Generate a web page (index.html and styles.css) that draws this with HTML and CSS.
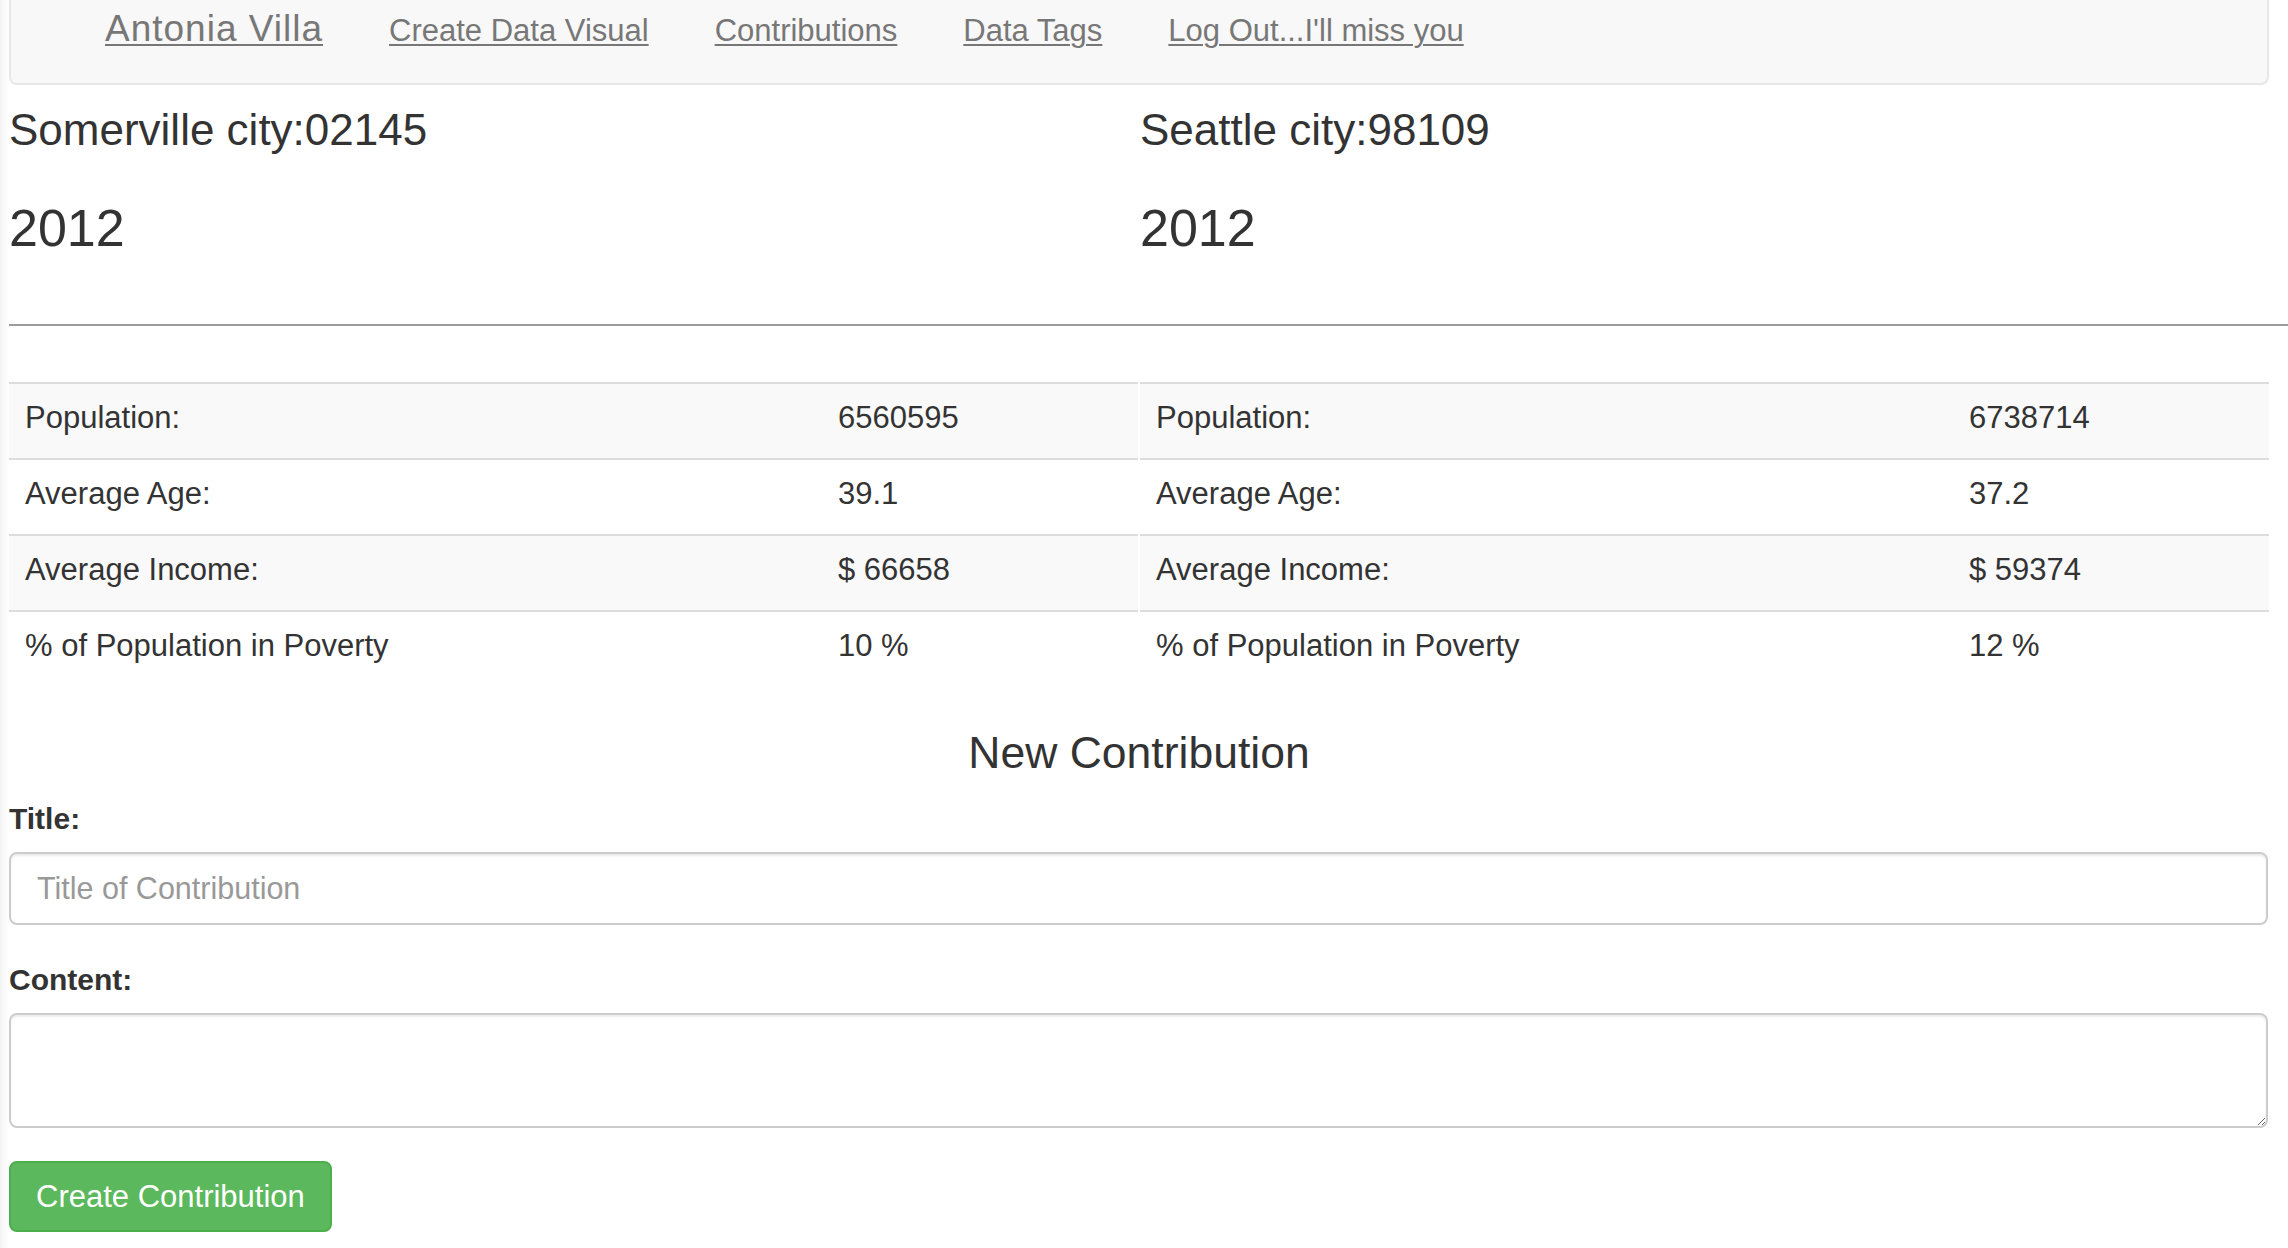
FILE: index.html
```html
<!DOCTYPE html>
<html lang="en">
<head>
<meta charset="utf-8">
<title>Compare Cities</title>
<link rel="stylesheet" href="styles.css">
</head>
<body>
<div class="wrap">
  <nav class="navbar">
    <a class="brand" href="#">Antonia Villa</a>
    <a class="nav-link" href="#">Create Data Visual</a>
    <a class="nav-link" href="#">Contributions</a>
    <a class="nav-link" href="#">Data Tags</a>
    <a class="nav-link" href="#">Log Out...I'll miss you</a>
  </nav>

  <section class="cities">
    <div class="city">
      <h3 class="city-name">Somerville city:02145</h3>
      <h2 class="city-year">2012</h2>
    </div>
    <div class="city">
      <h3 class="city-name">Seattle city:98109</h3>
      <h2 class="city-year">2012</h2>
    </div>
  </section>

  <hr class="divider">

  <section class="stats">
    <table class="stat-table">
      <tr><td class="label-cell">Population:</td><td>6560595</td></tr>
      <tr><td class="label-cell">Average Age:</td><td>39.1</td></tr>
      <tr><td class="label-cell">Average Income:</td><td>$ 66658</td></tr>
      <tr><td class="label-cell">% of Population in Poverty</td><td>10 %</td></tr>
    </table>
    <table class="stat-table">
      <tr><td class="label-cell">Population:</td><td>6738714</td></tr>
      <tr><td class="label-cell">Average Age:</td><td>37.2</td></tr>
      <tr><td class="label-cell">Average Income:</td><td>$ 59374</td></tr>
      <tr><td class="label-cell">% of Population in Poverty</td><td>12 %</td></tr>
    </table>
  </section>

  <h3 class="form-title">New Contribution</h3>

  <form class="contrib-form">
    <div class="form-group">
      <label class="form-label" for="title">Title:</label>
      <input class="form-input" id="title" type="text" placeholder="Title of Contribution">
    </div>
    <div class="form-group">
      <label class="form-label" for="content">Content:</label>
      <textarea class="form-textarea" id="content"></textarea>
    </div>
    <button class="btn-success" type="button">Create Contribution</button>
  </form>
</div>
</body>
</html>
```

FILE: styles.css
```css
* {
  box-sizing: border-box;
}

html, body {
  margin: 0;
  padding: 0;
}

body {
  font-family: "Liberation Sans", Arial, Helvetica, sans-serif;
  color: #333;
  background: linear-gradient(to right, #f3f3f3 0, #fbfbfb 5px, #ffffff 9px);
  min-height: 1248px;
  overflow: hidden;
}

.wrap {
  padding-left: 9px;
  width: 2288px;
}

/* Navbar */
.navbar {
  margin-right: 19px;
  height: 85px;
  background: #f8f8f8;
  border: 2px solid #e7e7e7;
  border-top: none;
  border-radius: 0 0 8px 8px;
  display: flex;
  align-items: baseline;
  padding: 9px 0 0 94px;
  gap: 66px;
}

.brand,
.nav-link {
  color: #777;
  text-decoration: underline;
  text-decoration-thickness: 2px;
  text-underline-offset: 3px;
  line-height: 40px;
}

.brand {
  font-size: 37px;
  letter-spacing: 1px;
}

.nav-link {
  font-size: 31px;
}

/* City headers */
.cities {
  margin-right: 19px;
  display: grid;
  grid-template-columns: 1131px 1fr;
}

.city-name {
  margin: 22px 0 0;
  font-size: 44px;
  line-height: 46px;
  font-weight: normal;
  color: #333;
}

.city-year {
  margin: 47px 0 0;
  font-size: 52px;
  line-height: 56px;
  font-weight: normal;
  color: #333;
}

.divider {
  margin: 68px 0 0;
  border: 0;
  height: 2px;
  background: #9c9c9c;
}

/* Stats tables */
.stats {
  margin: 56px 19px 0 0;
  display: grid;
  grid-template-columns: 1fr 1fr;
  column-gap: 2px;
}

.stat-table {
  width: 100%;
  border-collapse: collapse;
  border-spacing: 0;
}

.stat-table tr {
  border-top: 2px solid #dddddd;
}

.stat-table tr:nth-child(odd) {
  background: #f9f9f9;
}

.stat-table td {
  padding: 14px 16px 20px;
  font-size: 31px;
  line-height: 40px;
  color: #333;
  white-space: nowrap;
}

.stat-table .label-cell {
  width: 813px;
}

/* Form */
.form-title {
  margin: 44px 19px 23px 0;
  text-align: center;
  font-size: 44.5px;
  line-height: 46px;
  font-weight: normal;
  color: #333;
}

.contrib-form {
  margin-right: 20px;
}

.form-group {
  margin-bottom: 35px;
}

.form-label {
  display: block;
  font-size: 30px;
  line-height: 40px;
  font-weight: bold;
  color: #333;
  margin-bottom: 13px;
}

.form-input,
.form-textarea {
  display: block;
  width: 100%;
  border: 2px solid #cccccc;
  border-radius: 8px;
  background: #fff;
  box-shadow: inset 0 2px 2px rgba(0, 0, 0, 0.075);
  font-family: "Liberation Sans", Arial, Helvetica, sans-serif;
  font-size: 30.5px;
  color: #555;
  padding: 0 26px;
  margin: 0;
}

.form-input {
  height: 73px;
}

.form-input::placeholder {
  color: #999;
}

.form-textarea {
  height: 115px;
  padding: 12px 26px;
  resize: vertical;
}

.form-group:last-of-type {
  margin-bottom: 33px;
}

.btn-success {
  display: block;
  height: 71px;
  padding: 0 25px;
  background: #5cb85c;
  border: 2px solid #4cae4c;
  border-radius: 8px;
  color: #fff;
  font-family: "Liberation Sans", Arial, Helvetica, sans-serif;
  font-size: 31px;
  line-height: 40px;
  cursor: pointer;
}
```
